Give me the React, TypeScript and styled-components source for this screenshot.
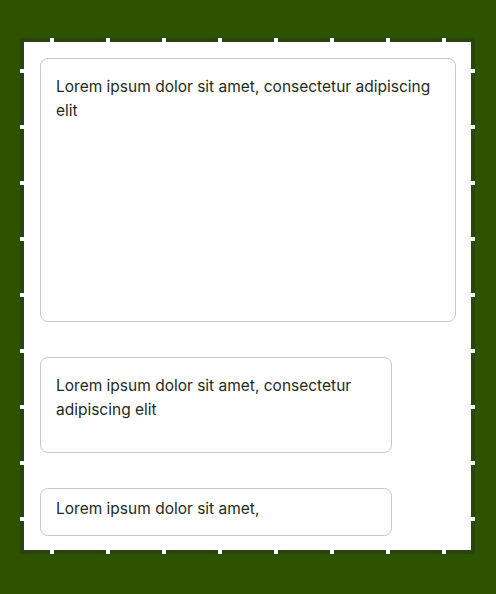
import React from "react";
import styled, { createGlobalStyle } from "styled-components";

const Global = createGlobalStyle`
  html, body {
    margin: 0;
    padding: 0;
    background: #2d5301;
    font-family: Inter, "Open Sans", sans-serif;
  }
`;

const Page = styled.div`
  padding: 38px 0 0 20px;
  width: 496px;
  height: 594px;
  box-sizing: border-box;
`;

const tick = "#ffffff";

const Frame = styled.div`
  position: relative;
  width: 455px;
  box-sizing: border-box;
  border: 4px solid #28440f;
  border-radius: 0 0 4px 0;
  background: #ffffff;

  &::before {
    content: "";
    position: absolute;
    inset: -4px;
    pointer-events: none;
    background-image:
      repeating-linear-gradient(to right, transparent 0 30px, ${tick} 30px 34px, transparent 34px 56px),
      repeating-linear-gradient(to right, transparent 0 30px, ${tick} 30px 34px, transparent 34px 56px),
      repeating-linear-gradient(to bottom, transparent 0 31px, ${tick} 31px 35px, transparent 35px 56px),
      repeating-linear-gradient(to bottom, transparent 0 31px, ${tick} 31px 35px, transparent 35px 56px);
    background-repeat: no-repeat;
    background-size: 100% 5px, 100% 5px, 5px 100%, 5px 100%;
    background-position: left top, left bottom, left top, right top;
  }
`;

const Stack = styled.div`
  display: flex;
  flex-direction: column;
  align-items: flex-start;
  gap: 35px;
  padding: 16px 15px 14px 16px;
`;

const Field = styled.textarea<{ $w: number; $h: number; $padY: number }>`
  display: block;
  width: ${(p) => p.$w}px;
  height: ${(p) => p.$h}px;
  box-sizing: border-box;
  margin: 0;
  padding: ${(p) => p.$padY}px 15px;
  border: 1px solid #c9c9c9;
  border-radius: 8px;
  background: #ffffff;
  color: #232c1c;
  font-family: Inter, "Open Sans", sans-serif;
  font-size: 15.5px;
  line-height: 24px;
  resize: none;
  overflow: hidden;
  outline: none;
`;

export default function App() {
  return (
    <>
      <Global />
      <Page>
        <Frame>
          <Stack>
            <Field
              $w={416}
              $h={264}
              $padY={16}
              readOnly
              defaultValue="Lorem ipsum dolor sit amet, consectetur adipiscing elit"
            />
            <Field
              $w={352}
              $h={96}
              $padY={16}
              readOnly
              defaultValue="Lorem ipsum dolor sit amet, consectetur adipiscing elit"
            />
            <Field
              $w={352}
              $h={48}
              $padY={8}
              readOnly
              defaultValue="Lorem ipsum dolor sit amet,"
            />
          </Stack>
        </Frame>
      </Page>
    </>
  );
}
